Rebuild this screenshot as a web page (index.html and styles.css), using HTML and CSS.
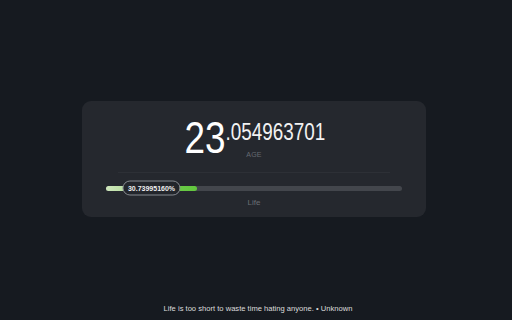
FILE: index.html
```html
<!DOCTYPE html>
<html lang="en">

<head>
  <meta charset="UTF-8">
  <meta name="viewport" content="width=device-width, initial-scale=1.0">
  <title>Age</title>
  <link rel="stylesheet" href="styles.css">
</head>

<body>
  <main id="main">
    <div id="age-card">
      <div class="age-row">
        <span class="age-int">23</span>
        <span class="age-dec">.054963701</span>
      </div>
      <div class="age-label">AGE</div>
      <hr class="divider">
      <div class="life-bar">
        <div class="life-fill" style="width: 30.74%;">
          <span class="life-badge">30.73995160%</span>
        </div>
      </div>
      <div class="life-label">Life</div>
    </div>
  </main>

  <footer id="quote">Life is too short to waste time hating anyone. • Unknown</footer>
</body>

</html>
```

FILE: styles.css
```css
body {
  margin: 0;
  height: 100vh;
  display: flex;
  flex-direction: column;
  background-color: #161a20;
  font-family: 'Liberation Sans Narrow', 'Liberation Sans', sans-serif;
  color: #ffffff;
}

#main {
  flex: 1;
  display: flex;
  justify-content: center;
  align-items: center;
  padding: 13px 4px 0 0;
}

#age-card {
  width: 344px;
  height: 116px;
  box-sizing: border-box;
  background-color: #25282e;
  border-radius: 9px;
  padding: 14px 24px 0;
}

/* the number font is narrower than anything installed */
.age-row {
  display: flex;
  justify-content: center;
  align-items: flex-start;
  padding-left: 2px;
  transform: scaleX(0.82);
}

.age-int {
  font-size: 45px;
  line-height: 45px;
}

.age-dec {
  font-size: 23px;
  line-height: 23px;
  margin-top: 6px;
  color: #f2f2f2;
}

.age-label {
  text-align: center;
  font-size: 7px;
  color: #666a71;
  letter-spacing: 0.3px;
  margin-top: -9px;
}

.divider {
  border: none;
  height: 1px;
  background-color: #2d3036;
  margin: 14px 12px 0;
}

.life-bar {
  position: relative;
  height: 5px;
  margin-top: 13px;
  background-color: #43464c;
  border-radius: 3px;
}

.life-fill {
  position: relative;
  height: 100%;
  border-radius: 3px;
  background: linear-gradient(to right, #cfe6bd, #b9dfa2 20%, #6ccb48 75%, #62c63e);
}

.life-badge {
  position: absolute;
  left: 50%;
  top: 50%;
  transform: translate(-50%, -50%);
  padding: 3px 4px 2px;
  font-size: 7px;
  font-weight: bold;
  line-height: 8px;
  white-space: nowrap;
  color: #f0f0f0;
  background-color: #23262c;
  border: 1px solid #85898f;
  border-radius: 8px;
}

.life-label {
  text-align: center;
  font-size: 8px;
  color: #6a6e75;
  margin-top: 7px;
}

#quote {
  text-align: center;
  font-size: 7.6px;
  color: #dcdcdc;
  padding: 0 0 7px 4px;
}
```
